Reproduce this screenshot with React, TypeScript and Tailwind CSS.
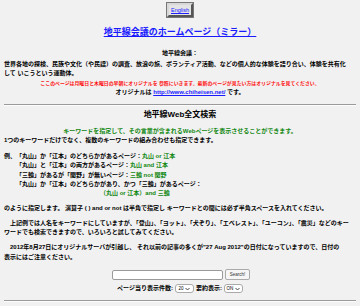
import React from "react";

const Chevron = () => (
  <svg width="5" height="4" viewBox="0 0 5 4" className="ml-[2px]">
    <path d="M0.5 1 L2.5 3 L4.5 1" fill="none" stroke="#333" strokeWidth="0.9" />
  </svg>
);

const IND = "\u3000";

export default function App() {
  return (
    <div
      className="min-h-[306px] w-[360px] bg-[#f1f1f1] px-[4px] text-[6px] leading-[9px] text-black font-semibold"
      style={{ fontFamily: '"Liberation Sans", "Noto Sans CJK JP", sans-serif' }}
    >
      <div className="flex justify-center pt-[3px]">
        <div className="flex h-[14px] w-[26px] items-center justify-center border-[2px] border-t-[#d8d8d8] border-l-[#d8d8d8] border-b-[#555] border-r-[#555] bg-[#e4e4e4] outline outline-1 outline-[#777]">
          <span className="text-[5.5px] leading-[6px] font-normal text-[#2020ff] underline">English</span>
        </div>
      </div>

      <h1 className="mt-[9px] text-center text-[9px] leading-[12px] font-bold">
        <a className="text-[#1a1aff] underline">地平線会議のホームページ（ミラー）</a>
      </h1>

      <div className="mt-[11px] text-center font-bold">地平線会議：</div>

      <p className="mt-[2px]">
        世界各地の探検、民族や文化（や民謡）の調査、放浪の旅、ボランティア活動、などの個人的な体験を語り合い、体験を共有化
        <br />
        して いこうという運動体。
      </p>

      <div className="mt-[1px] text-center text-[4.9px] text-[#ff1010]">
        ここのページは月曜日と木曜日の早朝にオリジナルを 参照にいきます。最新のページが見たい方はオリジナルを見てください。
      </div>
      <div className="text-center">
        オリジナルは <a className="text-[#1a1aff] underline">http://www.chiheisen.net/</a> です。
      </div>

      <div className="mt-[7px] border-t border-b border-t-[#9a9a9a] border-b-[#fdfdfd]" />

      <h2 className="mt-[3px] text-center text-[8px] leading-[11px] font-bold">地平線Web全文検索</h2>

      <div className="mt-[7px] text-center text-[#118811]">
        キーワードを指定して、その言葉が含まれるWebページを表示させることができます。
      </div>
      <div>1つのキーワードだけでなく、複数のキーワードの組み合わせも指定できます。</div>

      <div className="mt-[7px] flex leading-[9.3px]">
        <span className="w-[12px] shrink-0">例、</span>
        <div>
          <div>
            「丸山」か「江本」のどちらかがあるページ：<span className="text-[#118811]">丸山 or 江本</span>
          </div>
          <div>
            「丸山」と「江本」の両方があるページ：<span className="text-[#118811]">丸山 and 江本</span>
          </div>
          <div>
            「三輪」があるが「関野」が無いページ：<span className="text-[#118811]">三輪 not 関野</span>
          </div>
          <div>「丸山」か「江本」のどちらかがあり、かつ「三輪」があるページ：</div>
          <div className="pl-[84px] text-[#118811]">（丸山 or 江本）and 三輪</div>
        </div>
      </div>

      <p className="mt-[6px]">
        のように指定します。 演算子 ( ) and or not は半角で指定し キーワードとの間には必ず半角スペースを入れてください。
      </p>

      <p className="mt-[6px]">
        {IND}上記例では人名をキーワードにしていますが、「登山」、「ヨット」、「犬ぞり」、「エベレスト」、「ユーコン」、「震災」などのキー
        <br />
        ワードでも検索できますので、いろいろと試してみてください。
      </p>

      <p className="mt-[6px] leading-[9.5px]">
        {IND}2012年8月27日にオリジナルサーバが引越し、 それ以前の記事の多くが"27 Aug 2012"の日付になっていますので、日付の
        <br />
        表示にはご注意ください。
      </p>

      <div className="mt-[7px] flex items-center justify-center gap-[2px] pl-[2px]">
        <div className="h-[10px] w-[111px] rounded-[2px] border border-[#9a9a9a] bg-white" />
        <div className="flex h-[11px] w-[25px] items-center justify-center rounded-[2px] border border-[#aaa] bg-[#f6f6f6] text-[4.5px] font-normal leading-[5px] text-[#333]">
          Search!
        </div>
      </div>

      <div className="mt-[4px] flex items-center justify-center gap-[2px] font-bold">
        <span>ページ当り表示件数:</span>
        <span className="flex h-[9px] w-[19px] items-center justify-center rounded-[3px] border border-[#aaa] bg-white text-[4.5px] font-normal leading-[5px]">
          20
          <Chevron />
        </span>
        <span>要約表示:</span>
        <span className="flex h-[9px] w-[19px] items-center justify-center rounded-[3px] border border-[#aaa] bg-white text-[4.5px] font-normal leading-[5px]">
          ON
          <Chevron />
        </span>
      </div>

      <div className="mt-[7px] border-t border-b border-t-[#9a9a9a] border-b-[#fdfdfd]" />
    </div>
  );
}
